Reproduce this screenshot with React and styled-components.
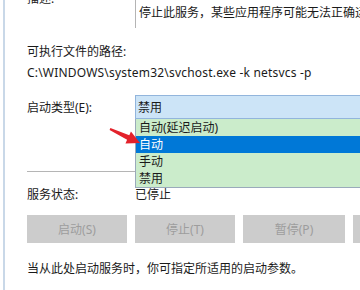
import styled, { createGlobalStyle } from "styled-components";

const Global = createGlobalStyle`
  html, body {
    margin: 0;
    background: #ffffff;
  }
  body {
    font-family: "Noto Sans", "Noto Sans CJK SC", sans-serif;
    font-size: 12px;
    color: #1a1a1a;
  }
`;

const Frame = styled.div`
  position: relative;
  width: 355px;
  height: 290px;
  margin-left: 3px;
  border-left: 2px solid #c9d8e8;
  overflow: hidden;
  background: #ffffff;
`;

const Content = styled.div`
  display: flex;
  flex-direction: column;
  padding-left: 22px;
  width: 600px;
`;

const Text = styled.div`
  line-height: 15px;
  white-space: nowrap;
  margin-top: ${(p) => p.$mt || 0}px;
  letter-spacing: ${(p) => p.$ls || 0}px;
`;

const Row = styled.div`
  display: flex;
  align-items: ${(p) => p.$align || "center"};
  margin-top: ${(p) => p.$mt || 0}px;
`;

const Label = styled.div`
  width: 108px;
  flex-shrink: 0;
  line-height: 15px;
  white-space: nowrap;
`;

const DescBox = styled.div`
  height: 23px;
  width: 300px;
  padding: 14px 0 0 3px;
  border-left: 1px solid #b4b4b4;
  line-height: 15px;
  white-space: nowrap;
`;

const Combo = styled.div`
  position: relative;
  width: 260px;
  height: 22px;
  display: flex;
  align-items: center;
  padding-left: 2px;
  background: #cce4f7;
  border: 1px solid #92b5dc;
`;

const DropList = styled.ul`
  position: absolute;
  top: 23px;
  left: -1px;
  width: 262px;
  margin: 0;
  padding: 0;
  list-style: none;
  background: #cbeccb;
  border: 1px solid #9aaabb;
  border-top: none;
`;

const Option = styled.li`
  height: 17px;
  line-height: 17px;
  padding-left: 3px;
  background: ${(p) => (p.$selected ? "#0078d7" : "transparent")};
  color: ${(p) => (p.$selected ? "#ffffff" : "#1a1a1a")};
`;

const Divider = styled.div`
  width: 108px;
  height: 1px;
  background: #b5b5b5;
  margin-top: 52px;
`;

const Buttons = styled.div`
  display: flex;
  gap: 8px;
  margin-top: 13px;
`;

const Button = styled.div`
  width: ${(p) => p.$w || 100}px;
  flex-shrink: 0;
  height: 28px;
  display: flex;
  align-items: center;
  justify-content: center;
  background: #cccccc;
  color: #9d9d9d;
`;

const Arrow = styled.svg`
  position: absolute;
  left: 95px;
  top: 122px;
`;

export default function App() {
  return (
    <>
      <Global />
      <Frame>
        <Content>
          <Row $align="flex-start" $mt={-9}>
            <Label>描述:</Label>
            <DescBox>停止此服务，某些应用程序可能无法正确运行。</DescBox>
          </Row>
          <Text $mt={16}>可执行文件的路径:</Text>
          <Text $mt={6} $ls={0.2}>
            C:\WINDOWS\system32\svchost.exe -k netsvcs -p
          </Text>
          <Row $mt={15}>
            <Label>启动类型(E):</Label>
            <Combo>
              禁用
              <DropList>
                <Option>自动(延迟启动)</Option>
                <Option $selected>自动</Option>
                <Option>手动</Option>
                <Option>禁用</Option>
              </DropList>
            </Combo>
          </Row>
          <Divider />
          <Row $mt={15}>
            <Label>服务状态:</Label>
            <Text>已停止</Text>
          </Row>
          <Buttons>
            <Button>启动(S)</Button>
            <Button>停止(T)</Button>
            <Button $w={102}>暂停(P)</Button>
            <Button>恢复(R)</Button>
          </Buttons>
          <Text $mt={18}>当从此处启动服务时，你可指定所适用的启动参数。</Text>
        </Content>
        <Arrow width="45" height="30" viewBox="0 0 45 30">
          <polygon
            points="10.4,6.1 29.3,13.2 30.95,9.6 40,21 25.45,21.4 27.1,17.8 9.6,7.9"
            fill="#e3222b"
          />
        </Arrow>
      </Frame>
    </>
  );
}
